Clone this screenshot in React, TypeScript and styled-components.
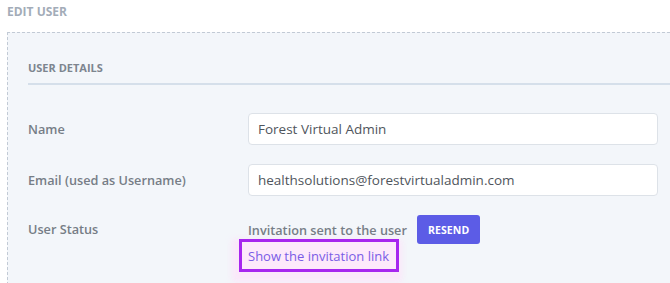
import React from "react";
import styled, { createGlobalStyle } from "styled-components";

const GlobalStyle = createGlobalStyle`
  html, body {
    margin: 0;
    padding: 0;
    background: #ffffff;
    font-family: "Open Sans", "Liberation Sans", sans-serif;
    overflow: hidden;
  }
`;

const Page = styled.div`
  width: 670px;
  height: 283px;
  padding: 4px 0 0 7px;
  box-sizing: border-box;
  overflow: hidden;
`;

const PageTitle = styled.h2`
  margin: 0;
  font-size: 12px;
  font-weight: 700;
  line-height: 16px;
  color: #a3acb8;
`;

const Panel = styled.section`
  margin-top: 12px;
  background: #f3f6fa;
  border-top: 1.5px dashed #c2cad5;
  border-left: 1.5px dashed #c2cad5;
  padding: 27px 0 40px 20px;
  min-height: 300px;
`;

const SectionHeader = styled.h3`
  margin: 0;
  padding-bottom: 8px;
  font-size: 11px;
  font-weight: 700;
  line-height: 15px;
  color: #7d858f;
  border-bottom: 2px solid #d5dfea;
`;

const Form = styled.div`
  display: flex;
  flex-direction: column;
  gap: 19px;
  padding-top: 28px;
  padding-right: 12px;
`;

const Row = styled.div<{ $align?: string }>`
  display: grid;
  grid-template-columns: 220px 1fr;
  align-items: ${(p) => p.$align || "center"};
`;

const Label = styled.label`
  font-size: 12.7px;
  font-weight: 600;
  color: #767d86;
`;

const Input = styled.input`
  height: 32px;
  box-sizing: border-box;
  border: 1px solid #dde2e8;
  border-radius: 4px;
  background: #ffffff;
  padding: 0 9px;
  font-family: inherit;
  font-size: 13.5px;
  color: #4f555c;
  outline: none;
`;

const StatusBox = styled.div`
  display: flex;
  flex-direction: column;
  align-items: flex-start;
`;

const StatusLine = styled.div`
  position: relative;
  z-index: 1;
  display: flex;
  align-items: center;
  gap: 10px;
`;

const StatusText = styled.span`
  font-size: 12.7px;
  font-weight: 600;
  color: #767d86;
`;

const ResendButton = styled.button`
  height: 29px;
  padding: 0 11px;
  border: none;
  border-radius: 3px;
  background: #5c5ce6;
  color: #ffffff;
  font-family: inherit;
  font-size: 10.5px;
  font-weight: 700;
  letter-spacing: 0.1px;
`;

const Highlight = styled.div`
  margin: -5px 0 0 -9px;
  padding: 2px 7px 3px 6px;
  border: 3px solid #a726ef;
  background: #fde9fb;
  box-shadow: -2px 5px 6px 5px rgba(253, 225, 250, 0.7);
`;

const LinkText = styled.a`
  font-size: 13px;
  color: #7a5ce6;
  text-decoration: none;
  cursor: pointer;
`;

export default function App() {
  return (
    <Page>
      <GlobalStyle />
      <PageTitle>EDIT USER</PageTitle>
      <Panel>
        <SectionHeader>USER DETAILS</SectionHeader>
        <Form>
          <Row>
            <Label>Name</Label>
            <Input defaultValue="Forest Virtual Admin" />
          </Row>
          <Row>
            <Label>Email (used as Username)</Label>
            <Input defaultValue="healthsolutions@forestvirtualadmin.com" />
          </Row>
          <Row $align="start">
            <Label style={{ lineHeight: "29px" }}>User Status</Label>
            <StatusBox>
              <StatusLine>
                <StatusText>Invitation sent to the user</StatusText>
                <ResendButton>RESEND</ResendButton>
              </StatusLine>
              <Highlight>
                <LinkText>Show the invitation link</LinkText>
              </Highlight>
            </StatusBox>
          </Row>
        </Form>
      </Panel>
    </Page>
  );
}
